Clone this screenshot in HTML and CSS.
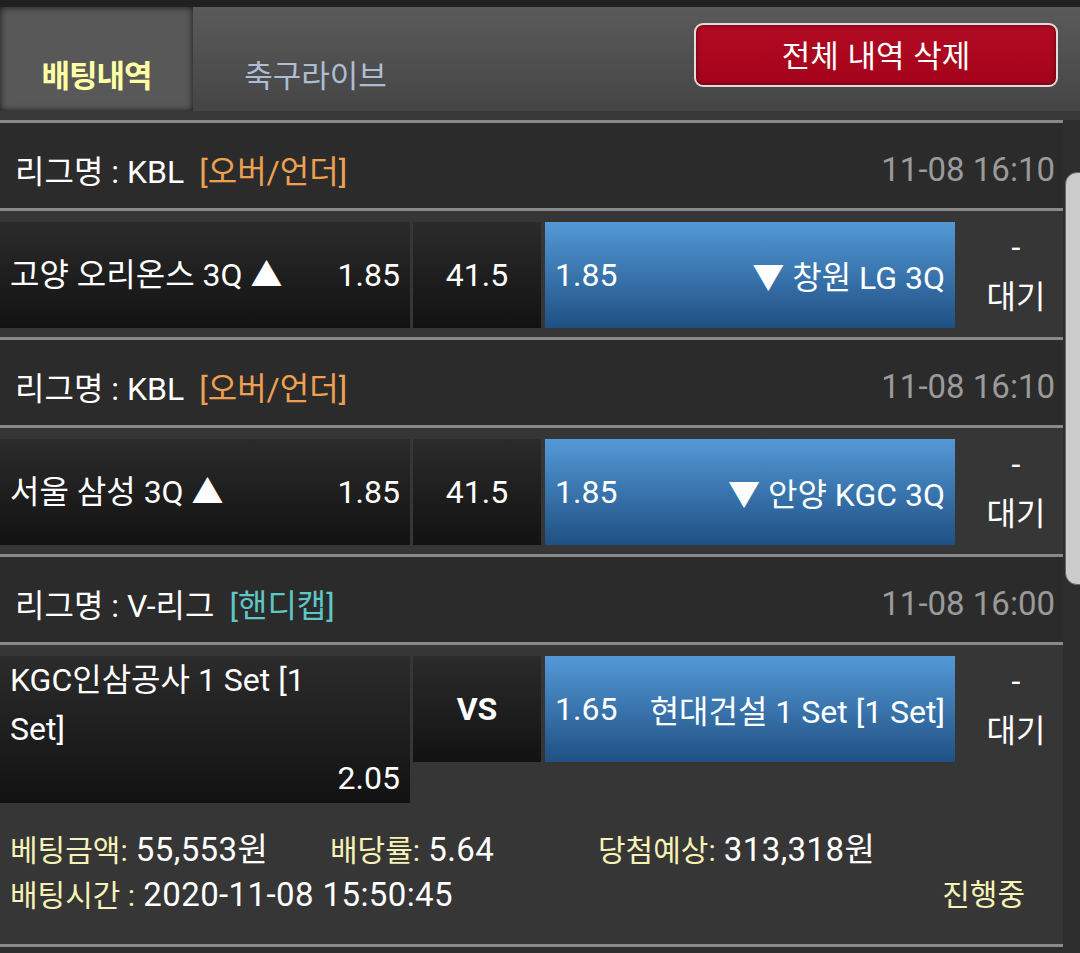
FILE: index.html
```html
<!DOCTYPE html>
<html lang="ko">
<head>
<meta charset="utf-8">
<title>배팅내역</title>
<link rel="stylesheet" href="styles.css">
</head>
<body>
<div class="page">
  <div class="topstrip"></div>
  <div class="tabbar">
    <div class="tab active">배팅내역</div>
    <div class="tab live">축구라이브</div>
    <button class="btn-delete">전체 내역 삭제</button>
  </div>
  <div class="band"></div>
  <div class="list">
    <div class="league">
      <div class="league-name">리그명 : KBL<span class="type over">[오버/언더]</span></div>
      <div class="league-date">11-08 16:10</div>
    </div>
    <div class="match">
      <div class="home"><span class="name">고양 오리온스 3Q ▲</span><span class="odds">1.85</span></div>
      <div class="mid">41.5</div>
      <div class="away"><span class="odds">1.85</span><span class="name">▼ 창원 LG 3Q</span></div>
      <div class="status"><div>-</div><div>대기</div></div>
    </div>
    <div class="league">
      <div class="league-name">리그명 : KBL<span class="type over">[오버/언더]</span></div>
      <div class="league-date">11-08 16:10</div>
    </div>
    <div class="match">
      <div class="home"><span class="name">서울 삼성 3Q ▲</span><span class="odds">1.85</span></div>
      <div class="mid">41.5</div>
      <div class="away"><span class="odds">1.85</span><span class="name">▼ 안양 KGC 3Q</span></div>
      <div class="status"><div>-</div><div>대기</div></div>
    </div>
    <div class="league">
      <div class="league-name">리그명 : V-리그<span class="type handi">[핸디캡]</span></div>
      <div class="league-date">11-08 16:00</div>
    </div>
    <div class="match">
      <div class="home stack"><span class="name">KGC인삼공사 1 Set [1 Set]</span><span class="odds">2.05</span></div>
      <div class="mid vs">VS</div>
      <div class="away"><span class="odds">1.65</span><span class="name">현대건설 1 Set [1 Set]</span></div>
      <div class="status"><div>-</div><div>대기</div></div>
    </div>
    <div class="summary">
      <div class="sum-row1">
        <div><span class="lbl">베팅금액:</span> <span class="val">55,553원</span></div>
        <div><span class="lbl">배당률:</span> <span class="val">5.64</span></div>
        <div><span class="lbl">당첨예상:</span> <span class="val">313,318원</span></div>
      </div>
      <div class="sum-row2">
        <div><span class="lbl">배팅시간 :</span> <span class="val">2020-11-08 15:50:45</span></div>
        <div class="lbl">진행중</div>
      </div>
    </div>
  </div>
  <div class="scrollthumb"></div>
</div>
</body>
</html>
```

FILE: styles.css
```css
* { box-sizing: border-box; }
html, body { margin: 0; padding: 0; }
body {
  background: #2c2c2c;
  font-family: Roboto, "Noto Sans CJK KR", sans-serif;
  color: #fff;
}
.page {
  position: relative;
  width: 1080px;
  height: 953px;
  overflow: hidden;
  background: #2d2d2d;
}
.topstrip { height: 7px; background: #202020; }
.tabbar {
  height: 104px;
  display: flex;
  background: linear-gradient(#5a5a5a, #454545);
}
.tab {
  width: 193px;
  text-align: center;
  font-family: "Noto Sans CJK KR", sans-serif;
  font-size: 31px;
  line-height: 48px;
  padding-top: 43px;
  color: #aebcd4;
}
.tab.live { width: 245px; letter-spacing: 0; }
.tab.active {
  background: #585858;
  color: #ffffa6;
  font-weight: 700;
  letter-spacing: -1px;
  box-shadow: inset 0 0 7px rgba(0,0,0,0.75);
}
.btn-delete {
  margin: 16px 22px 0 auto;
  width: 364px;
  height: 64px;
  border: 2px solid #e2dcdc;
  border-radius: 9px;
  background: linear-gradient(#b20a22, #a3041b);
  box-shadow: inset 0 0 4px rgba(0,0,0,0.5);
  color: #fff;
  font-family: "Noto Sans CJK KR", sans-serif;
  font-size: 31px;
  padding: 0 0 3px;
}
.band { height: 9px; background: #383838; }
.list { width: 1063px; }
.league {
  border-top: 3px solid #898989;
  background: #2b2b2b;
  height: 88px;
  padding: 7px 8px 0 15px;
  display: flex;
  align-items: center;
  justify-content: space-between;
  font-size: 32px;
}
.type { margin-left: 15px; }
.over { color: #eea052; }
.handi { color: #5ec6c6; }
.league-date { color: #9a9a9a; font-size: 33px; }
.match {
  border-top: 3px solid #898989;
  background: #363636;
  padding: 11px 0 9px;
  display: flex;
  align-items: flex-start;
  font-size: 32px;
}
.home {
  width: 410px;
  min-height: 106px;
  padding: 0 10px;
  display: flex;
  align-items: center;
  justify-content: space-between;
  line-height: 49px;
  background: linear-gradient(#2b2b2b, #121212);
}
.home.stack {
  flex-direction: column;
  align-items: stretch;
  justify-content: flex-start;
}
.home.stack .name { padding-right: 90px; }
.home.stack .odds { align-self: flex-end; }
.mid {
  width: 128px;
  margin-left: 3px;
  min-height: 106px;
  display: flex;
  align-items: center;
  justify-content: center;
  background: linear-gradient(#2b2b2b, #121212);
}
.mid.vs { font-weight: 700; }
.away {
  width: 410px;
  margin-left: 4px;
  min-height: 106px;
  padding: 0 10px;
  display: flex;
  align-items: center;
  justify-content: space-between;
  background: linear-gradient(#5399d7, #1f5083);
}
.status {
  width: 108px;
  padding-left: 14px;
  text-align: center;
  line-height: 50px;
}
.summary {
  background: #363636;
  padding: 16px 38px 26px 10px;
  border-bottom: 3px solid #898989;
  font-size: 33px;
  line-height: 44px;
}
.sum-row1 {
  display: grid;
  grid-template-columns: 320px 268px 1fr;
}
.sum-row2 {
  display: flex;
  justify-content: space-between;
}
.val { letter-spacing: 0.4px; }
.lbl { color: #f7f2b6; font-size: 30px; }
.scrollthumb {
  position: absolute;
  left: 1065px;
  top: 172px;
  width: 20px;
  height: 413px;
  background: #cbcbcb;
  border: 1px solid #666;
  border-radius: 12px 0 0 12px;
}
```
